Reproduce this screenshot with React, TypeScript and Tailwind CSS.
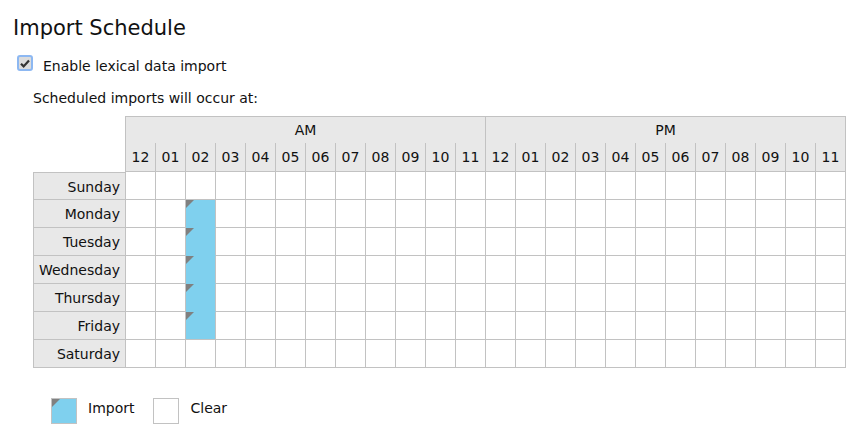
import React from 'react';

const hours = ['12', '01', '02', '03', '04', '05', '06', '07', '08', '09', '10', '11'];
const days = ['Sunday', 'Monday', 'Tuesday', 'Wednesday', 'Thursday', 'Friday', 'Saturday'];

// day -> list of hour slots (0..23) with an import
const schedule: Record<string, number[]> = {
  Monday: [2],
  Tuesday: [2],
  Wednesday: [2],
  Thursday: [2],
  Friday: [2],
};

const isOn = (day: string, slot: number) => (schedule[day] ?? []).includes(slot);

const Corner = () => (
  <span className="absolute top-0 left-0 w-0 h-0 border-t-[8px] border-r-[8px] border-t-[#808080] border-r-transparent" />
);

const Checkbox = () => (
  <span className="w-[16px] h-[16px] rounded-[3px] border-2 border-[#8db8f2] bg-[#dcdcdc] flex items-center justify-center">
    <svg width="10" height="9" viewBox="0 0 10 9">
      <path d="M1 4.8 L3.6 7.4 L9 1.4" fill="none" stroke="#333" strokeWidth="2.2" />
    </svg>
  </span>
);

export default function App() {
  return (
    <div className="w-[860px] h-[440px] bg-white text-[#111] font-['DejaVu_Sans',sans-serif] text-[14px] leading-[17px]">
      <h1 className="pl-[13px] pt-[16px] text-[21px] leading-[25px] font-normal">Import Schedule</h1>

      <div className="flex items-start mt-[14px] pl-[17px]">
        <Checkbox />
        <span className="ml-[10px] pt-[3px]">Enable lexical data import</span>
      </div>

      <p className="mt-[15px] pl-[33px]">Scheduled imports will occur at:</p>

      <div className="ml-[33px] mt-[9px] grid grid-cols-[93px_repeat(24,30px)] grid-rows-[27px_29px_repeat(7,28px)] text-[14px]">
        <div className="row-span-2 border-r border-[#c2c2c2]" />
        <div className="col-span-12 border-t border-r border-[#c2c2c2] bg-[#e8e8e8] flex items-center justify-center">AM</div>
        <div className="col-span-12 border-t border-r border-[#c2c2c2] bg-[#e8e8e8] flex items-center justify-center">PM</div>

        {[...hours, ...hours].map((h, i) => (
          <div
            key={`h${i}`}
            className="border-r border-b border-[#c2c2c2] bg-[#e8e8e8] flex items-center justify-center pt-[1px]"
          >
            {h}
          </div>
        ))}

        {days.map((day, d) => (
          <React.Fragment key={day}>
            <div
              className={`border-l border-r border-b border-[#c2c2c2] bg-[#e8e8e8] flex items-center justify-end pr-[5px] pt-[2px] ${
                d === 0 ? 'border-t' : ''
              }`}
            >
              {day}
            </div>
            {Array.from({ length: 24 }).map((_, s) => {
              const on = isOn(day, s);
              const nextOn = d < days.length - 1 && isOn(days[d + 1], s);
              return (
                <div
                  key={s}
                  className={`relative border-r border-b border-r-[#c2c2c2] ${
                    on ? 'bg-[#7fd0ee]' : 'bg-white'
                  } ${on && nextOn ? 'border-b-[#7fd0ee]' : 'border-b-[#c2c2c2]'}`}
                >
                  {on && <Corner />}
                </div>
              );
            })}
          </React.Fragment>
        ))}
      </div>

      <div className="mt-[30px] pl-[51px] flex items-start">
        <span className="relative w-[26px] h-[26px] border border-[#c2c2c2] bg-[#7fd0ee]">
          <Corner />
        </span>
        <span className="ml-[11px] pt-[2px]">Import</span>
        <span className="ml-[19px] w-[26px] h-[26px] border border-[#c2c2c2] bg-white" />
        <span className="ml-[11px] pt-[2px]">Clear</span>
      </div>
    </div>
  );
}
